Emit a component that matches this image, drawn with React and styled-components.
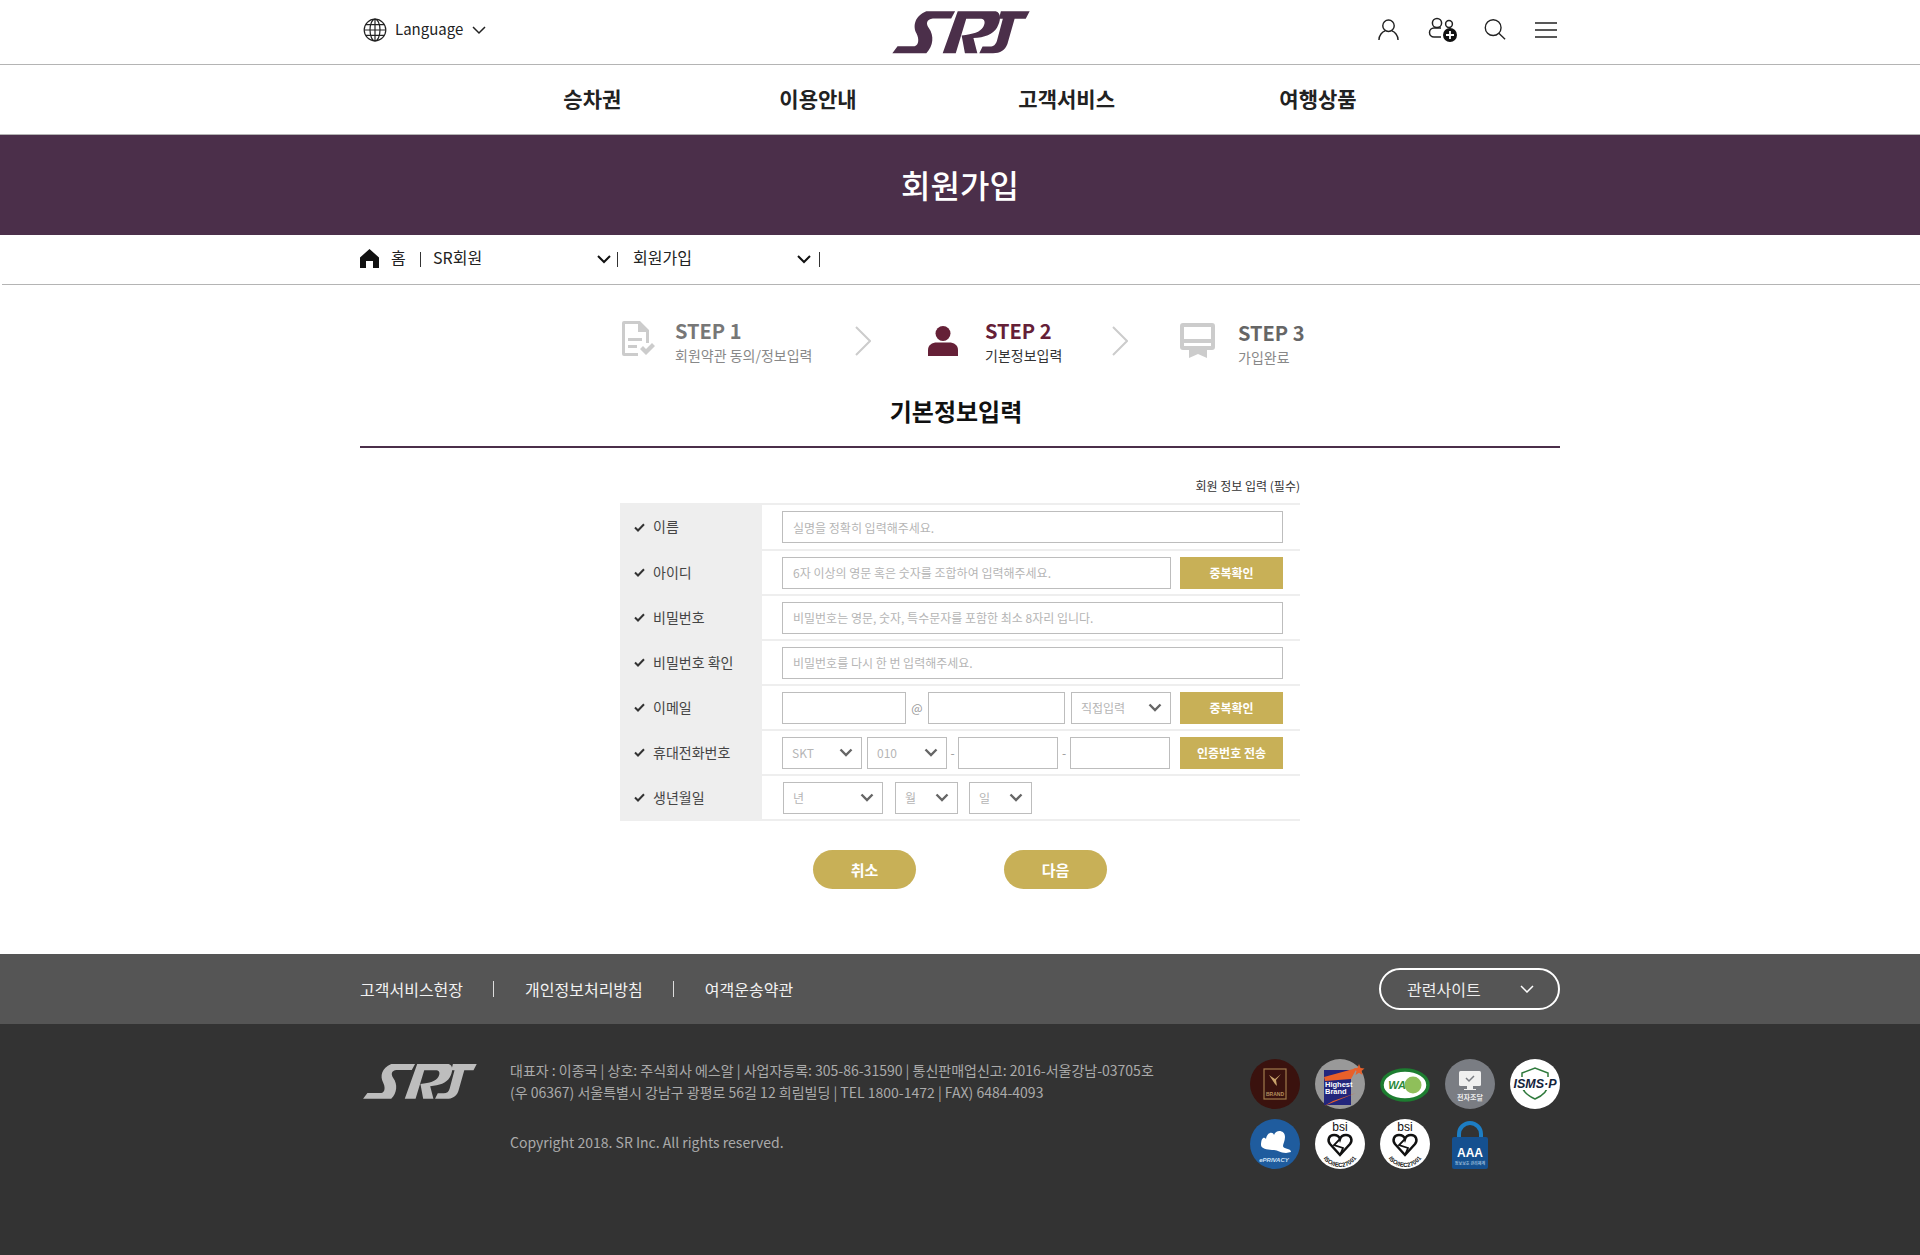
import React from "react";
import styled, { createGlobalStyle } from "styled-components";

const Global = createGlobalStyle`
  * { box-sizing: border-box; }
  html, body { margin: 0; padding: 0; background: #fff; }
  body { font-family: "Noto Sans CJK KR", "Noto Sans", sans-serif; color: #222; }
  input, select, button { font-family: inherit; }
`;

const Wrap = styled.div`
  width: 1200px;
  margin: 0 auto;
`;

/* header */
const TopBar = styled.header`
  height: 65px;
  border-bottom: 1px solid #b4b4b4;
`;
const TopInner = styled(Wrap)`
  height: 64px;
  padding-bottom: 5px;
  display: grid;
  grid-template-columns: 1fr auto 1fr;
  align-items: center;
`;
const Lang = styled.div`
  display: flex;
  align-items: center;
  font-size: 15px;
  padding-left: 3px;
  color: #222;
  span { margin: -3px 9px 0 8px; }
  svg:last-child { margin-top: 2px; }
`;
const LogoBox = styled.div`
  margin-top: 5px;
  line-height: 0;
`;
const TopIcons = styled.div`
  display: flex;
  justify-content: flex-end;
  align-items: center;
  padding-right: 3px;
`;
const TopIcon = styled.span`
  display: flex;
  margin-left: ${(p) => p.$ml || 0}px;
`;
const Nav = styled.nav`
  height: 70px;
  padding-bottom: 3px;
  border-bottom: 1px solid #b4b4b4;
  display: grid;
  grid-template-columns: 216px 239px 261px auto;
  justify-content: center;
  align-items: center;
  font-size: 21px;
  font-weight: 700;
  color: #222;
`;
const Hero = styled.h1`
  margin: 0;
  height: 100px;
  padding-bottom: 2px;
  background: #4b2f4a;
  color: #fff;
  display: flex;
  align-items: center;
  justify-content: center;
  font-size: 32px;
  font-weight: 500;
`;

/* breadcrumb */
const Crumbs = styled.div`
  height: 50px;
  margin-left: 2px;
  border-bottom: 1px solid #b4b4b4;
`;
const CrumbInner = styled(Wrap)`
  height: 49px;
  padding-bottom: 6px;
  display: flex;
  align-items: center;
  font-size: 16px;
  color: #222;
  transform: translateX(-1px);
`;
const CrumbHome = styled.span`
  display: flex;
  margin-top: 3px;
`;
const CrumbChevron = styled.span`
  display: flex;
  margin-top: 6px;
`;
const CrumbText = styled.span`
  width: ${(p) => p.$w}px;
  margin-left: ${(p) => p.$ml || 0}px;
`;
const CrumbBar = styled.i`
  width: 1px;
  height: 15px;
  background: #333;
  margin: 5px ${(p) => p.$mr || 0}px 0 ${(p) => p.$ml || 0}px;
`;

/* steps */
const Steps = styled.div`
  display: grid;
  grid-template-columns: 234px 73px 184px 68px auto;
  padding: 36px 0 0 261px;
  align-items: start;
`;
const Step = styled.div`
  display: flex;
  margin-top: ${(p) => p.$top || 0}px;
`;
const StepIcon = styled.div`
  width: ${(p) => p.$w}px;
  flex: none;
  padding-top: ${(p) => p.$pt || 0}px;
`;
const StepTitle = styled.div`
  font-size: 20px;
  line-height: 20px;
  font-weight: 700;
  color: ${(p) => p.$color};
`;
const StepSub = styled.div`
  font-size: 14px;
  line-height: 20px;
  margin-top: 4px;
  color: ${(p) => p.$color};
`;
const StepArrow = styled.svg`
  margin-top: 5px;
`;

const SectionTitle = styled.h2`
  margin: 27px 0 0;
  height: 54px;
  padding-right: 8px;
  border-bottom: 2px solid #4b2f4a;
  text-align: center;
  font-size: 24px;
  line-height: 34px;
  font-weight: 700;
  color: #111;
`;

/* form */
const FormArea = styled.div`
  width: 680px;
  margin: 30px 0 0 260px;
`;
const Note = styled.div`
  text-align: right;
  font-size: 12px;
  line-height: 16px;
  color: #333;
  margin-bottom: 9px;
`;
const Table = styled.div`
  border-bottom: 2px solid #eee;
`;
const Row = styled.div`
  display: grid;
  grid-template-columns: 142px 1fr;
  height: ${(p) => (p.$tall ? 46 : 45)}px;
  border-top: 2px solid #eee;
`;
const Label = styled.div`
  background: #eee;
  display: flex;
  align-items: center;
  padding-left: 14px;
  font-size: 14px;
  color: #444;
  span { margin-left: 8px; margin-top: -2px; }
`;
const Field = styled.div`
  display: flex;
  align-items: center;
  padding-left: ${(p) => p.$pl || 20}px;
  padding-right: 17px;
`;
const Input = styled.input`
  height: 32px;
  width: ${(p) => (p.$w ? `${p.$w}px` : "100%")};
  flex: ${(p) => (p.$w ? "none" : "1")};
  border: 1px solid #bdbdbd;
  background: #fff;
  padding: 0 10px;
  font-size: 12px;
  outline: none;
  &::placeholder { color: #b5b5b5; opacity: 1; }
`;
const arrow =
  "url(\"data:image/svg+xml;utf8,<svg xmlns='http://www.w3.org/2000/svg' width='14' height='9' viewBox='0 0 14 9'><path d='M1.5 1.5 7 7l5.5-5.5' fill='none' stroke='%23666' stroke-width='2.4'/></svg>\")";
const Select = styled.select`
  height: 32px;
  width: ${(p) => p.$w}px;
  flex: none;
  margin-left: ${(p) => p.$ml || 0}px;
  border: 1px solid #bdbdbd;
  border-radius: 0;
  padding: 0 0 0 9px;
  font-size: 12px;
  color: #b5b5b5;
  appearance: none;
  outline: none;
  background: #fff ${arrow} no-repeat right 8px center;
`;
const Sep = styled.span`
  flex: none;
  width: ${(p) => p.$w}px;
  text-align: center;
  font-size: 12px;
  color: #999;
`;
const GoldButton = styled.button`
  flex: none;
  width: 103px;
  height: 32px;
  margin-left: ${(p) => p.$ml || 9}px;
  border: 0;
  background: #c8b057;
  color: #fff;
  font-size: 12px;
  font-weight: 700;
  padding: 0;
`;
const Actions = styled.div`
  display: flex;
  justify-content: center;
  gap: 88px;
  margin-top: 29px;
  padding-bottom: 65px;
`;
const Pill = styled.button`
  width: 103px;
  height: 39px;
  border: 0;
  border-radius: 20px;
  background: #c8b057;
  color: #fff;
  font-size: 15px;
  font-weight: 700;
  padding: 0;
`;

/* footer */
const LinkBar = styled.div`
  height: 70px;
  background: #555;
`;
const LinkInner = styled(Wrap)`
  height: 70px;
  display: flex;
  align-items: center;
  font-size: 16px;
  color: #f2f2f2;
`;
const LinkSep = styled.i`
  width: 1px;
  height: 16px;
  margin: 0 31px 0 30px;
  background: #ddd;
`;
const Related = styled.div`
  margin-left: auto;
  width: 181px;
  height: 42px;
  border: 2px solid #fff;
  border-radius: 21px;
  display: flex;
  align-items: center;
  justify-content: space-between;
  padding: 0 24px 0 26px;
  font-size: 16px;
  color: #eee;
`;
const FootBottom = styled.footer`
  height: 231px;
  background: #333;
`;
const FootInner = styled(Wrap)`
  display: flex;
  padding-top: 35px;
`;
const FootLogo = styled.div`
  width: 150px;
  flex: none;
  padding: 4px 0 0 2px;
`;
const FootText = styled.div`
  flex: 1;
  font-size: 14px;
  line-height: 22px;
  color: #aaa;
  font-weight: 400;
  p { margin: 0; }
  p + p { margin-top: 28px; }
`;
const Badges = styled.div`
  flex: none;
  display: grid;
  grid-template-columns: repeat(5, 50px);
  grid-auto-rows: 50px;
  gap: 10px 15px;
  svg { display: block; }
`;

/* drawings */
const Logo = ({ width, fill }) => (
  <svg width={width} viewBox="10 18 425 136" fill={fill} aria-label="SRT">
    <path d="M118 22H206L194 44H138C118 46 116 60 126 74C142 96 140 128 118 150H14L30 129H82C96 125 96 106 88 90C76 68 82 36 118 22Z" />
    <path d="M214 22H330C348 26 346 52 334 72C322 92 296 102 262 104L274 150H236L226 96C262 92 282 86 292 70C300 56 296 46 286 45H240L208 150H168Z" />
    <path d="M346 22H434L422 45H388L366 122C358 142 344 150 322 150H280L290 130H312C324 130 330 124 334 112L352 45H340Z" />
  </svg>
);

const Globe = () => (
  <svg width="24" height="24" viewBox="0 0 24 24" fill="none" stroke="#222" strokeWidth="1.2">
    <circle cx="12" cy="12" r="10.8" />
    <ellipse cx="12" cy="12" rx="5" ry="10.8" />
    <path d="M12 1.2v21.6M1.2 12h21.6M2.8 6.6h18.4M2.8 17.4h18.4" />
  </svg>
);

const Chevron = ({ size = 14, color = "#222", sw = 1.5 }) => (
  <svg width={size} height={size * 0.6} viewBox="0 0 14 8.4" fill="none" stroke={color} strokeWidth={sw}>
    <path d="M1 1l6 6 6-6" />
  </svg>
);

const Check = () => (
  <svg width="11" height="9" viewBox="0 0 11 9" fill="none" stroke="#333" strokeWidth="2">
    <path d="M1 4.5 4 7.5 10 1.2" />
  </svg>
);

const UserIcon = () => (
  <svg width="21" height="23" viewBox="0 0 22 24" fill="none" stroke="#222" strokeWidth="1.5">
    <circle cx="11" cy="8" r="6" />
    <path d="M1 23c0-5 3.500-8.500 6.500-9.500M21 23c0-5-3.500-8.500-6.500-9.500" />
  </svg>
);

const UsersPlusIcon = () => (
  <svg width="30" height="26" viewBox="0 0 30 26" fill="none" stroke="#222" strokeWidth="1.5">
    <circle cx="9" cy="6" r="4.600" />
    <circle cx="21" cy="7" r="3.400" />
    <path d="M13 20H6a4.500 4.500 0 0 1 0-9h7" />
    <circle cx="22" cy="18" r="7" fill="#111" stroke="none" />
    <path d="M22 14v8M18 18h8" stroke="#fff" strokeWidth="1.8" />
  </svg>
);

const SearchIcon = () => (
  <svg width="22" height="23" viewBox="0 0 24 24" fill="none" stroke="#222" strokeWidth="1.5">
    <circle cx="10" cy="10" r="8.600" />
    <path d="M16.200 16.200 23 22.600" />
  </svg>
);

const MenuIcon = () => (
  <svg width="22" height="18" viewBox="0 0 22 18" fill="none" stroke="#222" strokeWidth="1.7">
    <path d="M0 2h22M0 9h22M0 16h22" />
  </svg>
);

const HomeIcon = () => (
  <svg width="19" height="19" viewBox="0 0 19 19" fill="#111">
    <path d="M9.500 0 19 8.500V19h-6v-7H6v7H0V8.500Z" />
  </svg>
);

const DocIcon = () => (
  <svg width="34" height="36" viewBox="0 0 34 36" fill="#ccc">
    <path d="M3 0h16l9 9v13h-3V11h-8V3H4v29h13v3H3a2 2 0 0 1-2-2V2a2 2 0 0 1 2-2Z" />
    <path d="M7 17h14v3H7zM7 24h9v3H7z" />
    <path d="M19 28l3-3 3 3 6-6 3 3-9 9Z" />
  </svg>
);

const PersonIcon = () => (
  <svg width="30" height="30" viewBox="0 0 30 30" fill="#652037">
    <circle cx="15" cy="7.500" r="7.500" />
    <path d="M0 30v-6c0-5 4-7.500 9-7.500h12c5 0 9 2.500 9 7.500v6Z" />
  </svg>
);

const CardIcon = () => (
  <svg width="35" height="35" viewBox="0 0 35 35" fill="#ccc">
    <path d="M3 0h29a3 3 0 0 1 3 3v21a3 3 0 0 1-3 3h-5v8l-9-4-9 4v-8H3a3 3 0 0 1-3-3V3a3 3 0 0 1 3-3Zm1 4v12h27V4ZM4 20v3h27v-3Z" fillRule="evenodd" />
  </svg>
);

const Arrow = () => (
  <StepArrow width="16" height="30" viewBox="0 0 16 30" fill="none" stroke="#ccc" strokeWidth="2">
    <path d="M1 1l14 14L1 29" />
  </StepArrow>
);

const Badge = ({ bg, children }) => (
  <svg width="50" height="50" viewBox="0 0 50 50">
    <circle cx="25" cy="25" r="25" fill={bg} />
    {children}
  </svg>
);

const BsiBadge = () => (
  <Badge bg="#fff">
    <text x="25" y="12" textAnchor="middle" fontSize="12" fontFamily="Liberation Sans" fill="#111">bsi</text>
    <path d="M25 36 15 25c-3-4-1-9 4-9 3 0 5 1 6 4 1-3 3-4 6-4 5 0 7 5 4 9Z" fill="none" stroke="#111" strokeWidth="2.500" />
    <path d="M25 20 19 26l9 3-3 7" fill="none" stroke="#111" strokeWidth="1.800" />
    <path id="bsi-arc" d="M5 28a20 20 0 0 0 40 0" fill="none" />
    <text fontSize="6" fontWeight="700" fontFamily="Liberation Sans" fill="#111" textAnchor="middle">
      <textPath href="#bsi-arc" startOffset="50%">ISO/IEC27001</textPath>
    </text>
  </Badge>
);

const BadgeList = () => (
  <Badges>
    <Badge bg="#3a120e">
      <rect x="14" y="10" width="22" height="30" fill="none" stroke="#a07a4c" strokeWidth="1.2" />
      <path d="M25 25 19 16l6 4 6-5-5 6 1 6-2-2Z" fill="#c9a36b" />
      <text x="25" y="37" textAnchor="middle" fontSize="5" fontWeight="700" fontFamily="Liberation Sans" fill="#b58f5e">BRAND</text>
    </Badge>
    <Badge bg="#999">
      <rect x="9" y="11" width="27" height="35" fill="#23267c" />
      <path d="M9 18 42 9 36 20 10 22ZM18 42 41 34 9 47Z" fill="#e8602a" />
      <path d="M44 5l1.500 4 4 .5-3 2.500 1 4-3.500-2.200-3.500 2.200 1-4-3-2.500 4-.5Z" fill="#e8602a" />
      <text x="10" y="28" fontSize="7.500" fontWeight="700" fontFamily="Liberation Sans" fill="#fff">Highest</text>
      <text x="10" y="35" fontSize="7.500" fontWeight="700" fontFamily="Liberation Sans" fill="#fff">Brand</text>
    </Badge>
    <svg width="50" height="50" viewBox="0 0 50 50">
      <ellipse cx="25" cy="26" rx="23" ry="15" fill="#fff" stroke="#1d7d30" strokeWidth="3.500" />
      <text x="17" y="30" textAnchor="middle" fontSize="11" fontWeight="700" fontStyle="italic" fontFamily="Liberation Sans" fill="#2a8a3a">WA</text>
      <circle cx="33" cy="26" r="8.500" fill="#8fbf5a" />
    </svg>
    <Badge bg="#7a7d83">
      <rect x="14" y="12" width="22" height="15" rx="1.500" fill="#f0f0f0" />
      <path d="M21 19l3 3 5-5" fill="none" stroke="#7a7d83" strokeWidth="1.500" />
      <path d="M22 27h6v3h3v1H19v-1h3Z" fill="#f0f0f0" />
      <text x="25" y="41" textAnchor="middle" fontSize="7" fontWeight="700" fill="#eee">전자조달</text>
    </Badge>
    <Badge bg="#fff">
      <path d="M12 14 25 9l13 5v11c0 8-6 12-13 15-7-3-13-7-13-15Z" fill="none" stroke="#2f7a3c" strokeWidth="1.500" />
      <rect x="1" y="18" width="48" height="13" fill="#fff" />
      <text x="25" y="29" textAnchor="middle" fontSize="12.500" fontWeight="700" fontStyle="italic" fontFamily="Liberation Sans" fill="#14233c">ISMS·P</text>
    </Badge>
    <Badge bg="#1f5c9e">
      <path d="M11 26c0-7 3-9 5-6 1-7 7-8 8-4 2-6 11-5 11 2 0 4-2 7-2 9 0 3 8 2 8 6l-5 1c-6 0-8-3-12-3-5 0-13-1-13-5Z" fill="#fff" />
      <text x="24" y="43" textAnchor="middle" fontSize="6" fontWeight="700" fontStyle="italic" fontFamily="Liberation Sans" fill="#cfe3f7">ePRIVACY</text>
    </Badge>
    <BsiBadge />
    <BsiBadge />
    <svg width="50" height="50" viewBox="0 0 50 50">
      <path d="M14 24v-9a11 11 0 0 1 22 0v9" fill="none" stroke="#1d7ec4" strokeWidth="4" />
      <rect x="7" y="18" width="36" height="32" rx="2" fill="#15508f" />
      <text x="25" y="38" textAnchor="middle" fontSize="12" fontWeight="700" fontFamily="Liberation Sans" fill="#fff">AAA</text>
      <text x="25" y="46" textAnchor="middle" fontSize="4" fill="#cfe3f7">정보보호 관리체계</text>
    </svg>
  </Badges>
);

const FormRow = ({ label, tall, children, pl }) => (
  <Row $tall={tall}>
    <Label>
      <Check />
      <span>{label}</span>
    </Label>
    <Field $pl={pl}>{children}</Field>
  </Row>
);

export default function App() {
  return (
    <>
      <Global />
      <TopBar>
        <TopInner>
          <Lang>
            <Globe />
            <span>Language</span>
            <Chevron />
          </Lang>
          <LogoBox><Logo width={139} fill="#4b2f4a" /></LogoBox>
          <TopIcons>
            <TopIcon><UserIcon /></TopIcon>
            <TopIcon $ml={29}><UsersPlusIcon /></TopIcon>
            <TopIcon $ml={26}><SearchIcon /></TopIcon>
            <TopIcon $ml={29}><MenuIcon /></TopIcon>
          </TopIcons>
        </TopInner>
      </TopBar>
      <Nav>
        <span>승차권</span>
        <span>이용안내</span>
        <span>고객서비스</span>
        <span>여행상품</span>
      </Nav>
      <Hero>회원가입</Hero>
      <Crumbs>
        <CrumbInner>
          <CrumbHome><HomeIcon /></CrumbHome>
          <CrumbText $w={29} $ml={12}>홈</CrumbText>
          <CrumbBar $mr={12} />
          <CrumbText $w={164}>SR회원</CrumbText>
          <CrumbChevron><Chevron color="#111" sw={2} /></CrumbChevron>
          <CrumbBar $ml={6} $mr={15} />
          <CrumbText $w={164}>회원가입</CrumbText>
          <CrumbChevron><Chevron color="#111" sw={2} /></CrumbChevron>
          <CrumbBar $ml={8} />
        </CrumbInner>
      </Crumbs>
      <Wrap>
        <Steps>
          <Step>
            <StepIcon $w={54}><DocIcon /></StepIcon>
            <div>
              <StepTitle $color="#777">STEP 1</StepTitle>
              <StepSub $color="#888">회원약관 동의/정보입력</StepSub>
            </div>
          </Step>
          <Arrow />
          <Step>
            <StepIcon $w={57} $pt={5}><PersonIcon /></StepIcon>
            <div>
              <StepTitle $color="#652037">STEP 2</StepTitle>
              <StepSub $color="#333">기본정보입력</StepSub>
            </div>
          </Step>
          <Arrow />
          <Step $top={2}>
            <StepIcon $w={58}><CardIcon /></StepIcon>
            <div>
              <StepTitle $color="#666">STEP 3</StepTitle>
              <StepSub $color="#888">가입완료</StepSub>
            </div>
          </Step>
        </Steps>
        <SectionTitle>기본정보입력</SectionTitle>
        <FormArea>
          <Note>회원 정보 입력 (필수)</Note>
          <Table>
            <FormRow label="이름" tall>
              <Input placeholder="실명을 정확히 입력해주세요." />
            </FormRow>
            <FormRow label="아이디">
              <Input placeholder="6자 이상의 영문 혹은 숫자를 조합하여 입력해주세요." />
              <GoldButton>중복확인</GoldButton>
            </FormRow>
            <FormRow label="비밀번호">
              <Input placeholder="비밀번호는 영문, 숫자, 특수문자를 포함한 최소 8자리 입니다." />
            </FormRow>
            <FormRow label="비밀번호 확인">
              <Input placeholder="비밀번호를 다시 한 번 입력해주세요." />
            </FormRow>
            <FormRow label="이메일">
              <Input $w={124} />
              <Sep $w={22}>@</Sep>
              <Input $w={137} />
              <Select $w={100} $ml={6}><option>직접입력</option></Select>
              <GoldButton>중복확인</GoldButton>
            </FormRow>
            <FormRow label="휴대전화번호">
              <Select $w={80}><option>SKT</option></Select>
              <Select $w={80} $ml={5}><option>010</option></Select>
              <Sep $w={11}>-</Sep>
              <Input $w={100} />
              <Sep $w={12}>-</Sep>
              <Input $w={100} />
              <GoldButton $ml={10}>인증번호 전송</GoldButton>
            </FormRow>
            <FormRow label="생년월일" pl={21}>
              <Select $w={100}><option>년</option></Select>
              <Select $w={63} $ml={12}><option>월</option></Select>
              <Select $w={63} $ml={11}><option>일</option></Select>
            </FormRow>
          </Table>
        </FormArea>
        <Actions>
          <Pill>취소</Pill>
          <Pill>다음</Pill>
        </Actions>
      </Wrap>
      <LinkBar>
        <LinkInner>
          <span>고객서비스헌장</span>
          <LinkSep />
          <span>개인정보처리방침</span>
          <LinkSep />
          <span>여객운송약관</span>
          <Related>
            관련사이트
            <Chevron color="#fff" />
          </Related>
        </LinkInner>
      </LinkBar>
      <FootBottom>
        <FootInner>
          <FootLogo><Logo width={115} fill="#bdbdbd" /></FootLogo>
          <FootText>
            <p>
              대표자 : 이종국 | 상호: 주식회사 에스알 | 사업자등록: 305-86-31590 | 통신판매업신고: 2016-서울강남-03705호
              <br />
              (우 06367) 서울특별시 강남구 광평로 56길 12 희림빌딩 | TEL 1800-1472 | FAX) 6484-4093
            </p>
            <p>Copyright 2018. SR Inc. All rights reserved.</p>
          </FootText>
          <BadgeList />
        </FootInner>
      </FootBottom>
    </>
  );
}
